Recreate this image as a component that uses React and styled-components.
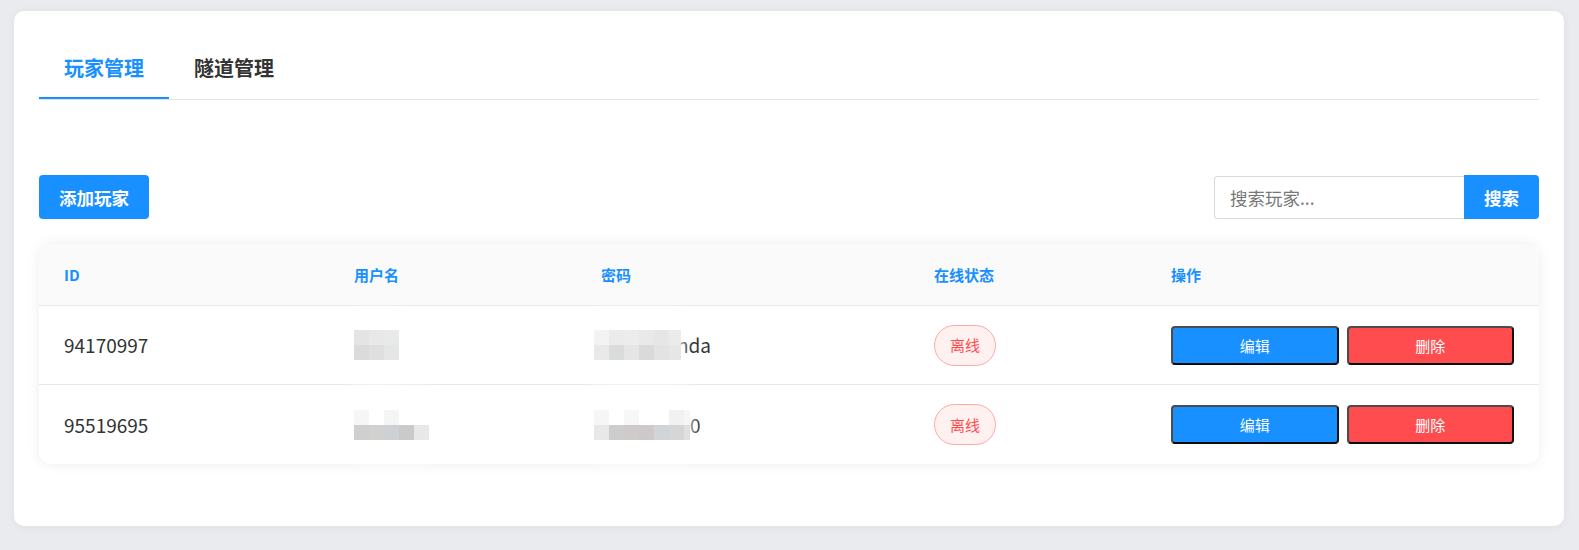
import React from "react";
import styled, { createGlobalStyle } from "styled-components";

const GlobalStyle = createGlobalStyle`
  html, body { margin: 0; padding: 0; background: #eaebee; }
  body { font-family: "Noto Sans CJK SC", "Noto Sans", sans-serif; }
  * { box-sizing: border-box; }
`;

const Page = styled.div`
  padding: 11px 15px 24px 14px;
`;

const Card = styled.div`
  background: #fff;
  border-radius: 10px;
  box-shadow: 0 1px 10px rgba(0, 0, 0, 0.05);
  padding: 25px 25px 62px;
  display: flex;
  flex-direction: column;
`;

const TabList = styled.div`
  display: flex;
  border-bottom: 1px solid #e4e5e8;
`;

const Tab = styled.div`
  padding: 20px 25px 17px;
  font-size: 20px;
  line-height: 24px;
  font-weight: 700;
  color: ${(p) => (p.$active ? "#1890ff" : "#333")};
  border-bottom: 2px solid ${(p) => (p.$active ? "#1890ff" : "transparent")};
`;

const Content = styled.div`
  padding-top: 75px;
  display: flex;
  flex-direction: column;
  gap: 25px;
`;

const Toolbar = styled.div`
  display: flex;
  justify-content: space-between;
  align-items: flex-end;
`;

const PrimaryButton = styled.button`
  height: 44px;
  padding: 0 20px;
  border: none;
  border-radius: ${(p) => p.$radius || "4px"};
  background: #1890ff;
  color: #fff;
  font-family: inherit;
  font-size: 17.5px;
  font-weight: 700;
  cursor: pointer;
`;

const SearchGroup = styled.div`
  display: flex;
  align-items: flex-end;
`;

const SearchInput = styled.input`
  width: 250px;
  height: 43px;
  padding: 0 15px;
  border: 1px solid #d9d9d9;
  border-right: none;
  border-radius: 4px 0 0 4px;
  font-family: inherit;
  font-size: 17.5px;
  color: #333;
  outline: none;
  &::placeholder { color: #777; }
`;

const Table = styled.div`
  border-radius: 12px;
  background: #fff;
  box-shadow: 0 0 14px rgba(0, 0, 0, 0.07);
`;

const Row = styled.div`
  display: grid;
  grid-template-columns: 290px 247px 333px 237px 1fr;
  align-items: center;
  height: ${(p) => (p.$header ? "62px" : "79px")};
  background: ${(p) => (p.$header ? "#fafafa" : "transparent")};
  border-radius: ${(p) => (p.$header ? "12px 12px 0 0" : "0")};
  border-bottom: 1px solid #e8e8e8;
  &:last-child { border-bottom: none; }
`;

const HeadCell = styled.div`
  padding: 0 25px;
  font-size: 15px;
  font-weight: 700;
  color: #1890ff;
  line-height: 22px;
`;

const Cell = styled.div`
  padding: 0 25px;
  font-size: 19px;
  line-height: 26px;
  color: #333;
  display: flex;
  align-items: center;
`;

const Mosaic = styled.div`
  position: relative;
  z-index: 1;
  display: grid;
  grid-template-columns: ${(p) => p.$cols};
  grid-auto-rows: 15px;
  margin-left: ${(p) => p.$shift || "0"};
  box-shadow: 0 -18px 12px 2px #fff, 0 18px 12px 2px #fff;
`;

const Pixel = styled.span`
  display: block;
  background: ${(p) => p.$c};
`;

const Tail = styled.span`
  margin-left: ${(p) => p.$overlap || "0"};
`;

const Badge = styled.span`
  display: inline-flex;
  align-items: center;
  justify-content: center;
  height: 41px;
  padding: 0 15px;
  border-radius: 21px;
  border: 1px solid #ffa8a6;
  background: #fff1f0;
  color: #ff4d4f;
  font-size: 15px;
`;

const Actions = styled.div`
  display: flex;
  gap: 8px;
  padding: 0 25px;
`;

const ActionButton = styled.button`
  flex: 1;
  height: 39px;
  border-width: 2px;
  border-style: solid;
  border-color: #4c4c4c #111 #0a0a0a #4c4c4c;
  border-radius: 4px;
  background: ${(p) => (p.$danger ? "#ff4d4f" : "#1890ff")};
  color: #fff;
  font-family: inherit;
  font-size: 15px;
  cursor: pointer;
`;

function MosaicBlock({ cols, rows, shift }) {
  return (
    <Mosaic $cols={cols.map((c) => `${c}px`).join(" ")} $shift={shift}>
      {rows.flat().map((c, i) => (
        <Pixel key={i} $c={c} />
      ))}
    </Mosaic>
  );
}

const players = [
  {
    id: "94170997",
    user: {
      cols: [15, 15, 15],
      rows: [
        ["#e4e4e4", "#e8e8e8", "#e8eaea"],
        ["#dcdbdb", "#e0dfdf", "#e6e6e6"],
      ],
    },
    pass: {
      shift: "-7px",
      cols: [15, 15, 15, 15, 15, 12],
      rows: [
        ["#f3f3f3", "#ebebeb", "#ececec", "#e9e9e9", "#e6e6e6", "#ebebeb"],
        ["#e9e9e9", "#dadbdd", "#e5e5e3", "#d9dadb", "#e3e3e3", "#e6e6e6"],
      ],
    },
    tail: "nda",
    overlap: "-4px",
  },
  {
    id: "95519695",
    user: {
      cols: [15, 15, 15, 15, 15],
      rows: [
        ["#f6f6f6", "#ffffff", "#f4f6f6", "transparent", "transparent"],
        ["#d0cfcf", "#d3d1d0", "#cdd1d4", "#cacaca", "#e7e8ea"],
      ],
    },
    pass: {
      shift: "-7px",
      cols: [15, 15, 15, 15, 15, 15, 6],
      rows: [
        ["#f6f6f6", "#ffffff", "#f7f7f7", "#ffffff", "#ffffff", "#f1f1f1", "#f6f6f6"],
        ["#e9e7e8", "#cdcdcd", "#cfcbcb", "#cdc9c8", "#d2d5d8", "#d6d6d6", "#e0e0e0"],
      ],
    },
    tail: "0",
    overlap: "0",
  },
];

export default function App() {
  return (
    <>
      <GlobalStyle />
      <Page>
        <Card>
          <TabList>
            <Tab $active>玩家管理</Tab>
            <Tab>隧道管理</Tab>
          </TabList>
          <Content>
            <Toolbar>
              <PrimaryButton>添加玩家</PrimaryButton>
              <SearchGroup>
                <SearchInput placeholder="搜索玩家..." />
                <PrimaryButton $radius="0 4px 4px 0">搜索</PrimaryButton>
              </SearchGroup>
            </Toolbar>
            <Table>
              <Row $header>
                <HeadCell>ID</HeadCell>
                <HeadCell>用户名</HeadCell>
                <HeadCell>密码</HeadCell>
                <HeadCell>在线状态</HeadCell>
                <HeadCell>操作</HeadCell>
              </Row>
              {players.map((p) => (
                <Row key={p.id}>
                  <Cell>{p.id}</Cell>
                  <Cell>
                    <MosaicBlock {...p.user} />
                  </Cell>
                  <Cell>
                    <MosaicBlock {...p.pass} />
                    <Tail $overlap={p.overlap}>{p.tail}</Tail>
                  </Cell>
                  <Cell>
                    <Badge>离线</Badge>
                  </Cell>
                  <Actions>
                    <ActionButton>编辑</ActionButton>
                    <ActionButton $danger>删除</ActionButton>
                  </Actions>
                </Row>
              ))}
            </Table>
          </Content>
        </Card>
      </Page>
    </>
  );
}
